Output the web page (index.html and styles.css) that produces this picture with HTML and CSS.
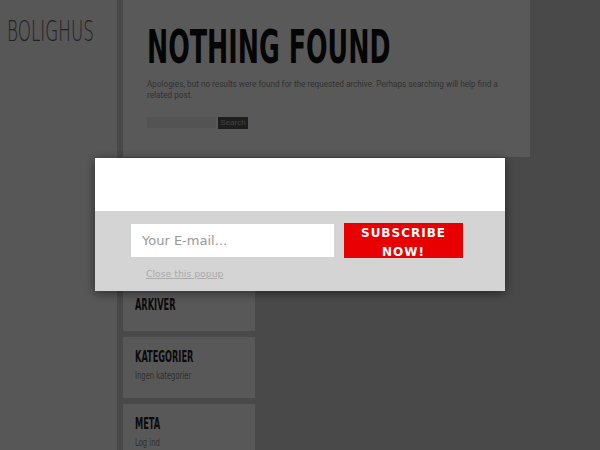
FILE: index.html
```html
<!DOCTYPE html>
<html>
<head>
<meta charset="UTF-8">
<title>Bolighus</title>
<link rel="stylesheet" href="styles.css">
</head>
<body>
<div class="site">
	<header class="masthead">
		<h1 class="site-title"><span class="squeeze">BOLIGHUS</span></h1>
	</header>
	<div class="main">
		<section class="content">
			<h2 class="page-title"><span class="squeeze">NOTHING FOUND</span></h2>
			<p>Apologies, but no results were found for the requested archive. Perhaps searching will help find a related post.</p>
			<form class="searchform">
				<input type="text" class="search-field">
				<input type="submit" class="search-btn" value="Search">
			</form>
		</section>
		<aside class="widgets">
			<div class="widget widget-search">
				<h3 class="widget-title"><span class="squeeze">SØG</span></h3>
			</div>
			<div class="widget">
				<h3 class="widget-title"><span class="squeeze">ARKIVER</span></h3>
			</div>
			<div class="widget">
				<h3 class="widget-title"><span class="squeeze">KATEGORIER</span></h3>
				<ul><li><span class="squeeze">Ingen kategorier</span></li></ul>
			</div>
			<div class="widget">
				<h3 class="widget-title"><span class="squeeze">META</span></h3>
				<ul><li><span class="squeeze">Log ind</span></li></ul>
			</div>
		</aside>
	</div>
</div>

<!-- popup over a dark layer -->
<div class="overlay"></div>
<div class="popup">
	<div class="popup-top"></div>
	<form class="popup-form">
		<div class="popup-row">
			<input type="email" class="popup-email" placeholder="Your E-mail...">
			<button type="submit" class="popup-btn">SUBSCRIBE NOW!</button>
		</div>
		<a href="#" class="popup-close">Close this popup</a>
	</form>
</div>
</body>
</html>
```
FILE: styles.css
```css
body{margin:0; background:#d0d0d0; font-family:Roboto, "Liberation Sans", sans-serif; height:450px; overflow:hidden}
.site{display:flex; gap:6px; align-items:flex-start}
.masthead{width:117px; height:450px; background:#f8f8f8; flex:none}
.squeeze{display:inline-block; font-family:"DejaVu Sans", sans-serif; font-stretch:condensed; transform:scaleX(.72); transform-origin:left center; white-space:nowrap}
.site-title{margin:0; padding:16px 0 0 7px; font-size:28px; font-weight:200; line-height:32px; color:#5e5e5e}
.site-title .squeeze{transform:scaleX(.6)}
.main{display:flex; flex-direction:column; gap:6px}
.content{width:407px; height:157px; background:#fff; padding:0 0 0 24px; box-sizing:border-box}
.page-title{margin:0; padding-top:20px; font-size:47px; font-weight:bold; line-height:54px; color:#111}
.page-title .squeeze{transform:scaleX(.6)}
.content p{margin:5px 0 0; width:360px; font-size:8.2px; line-height:10.5px; color:#8f8f8f}
.searchform{margin-top:17px; display:flex; gap:2px}
.search-field{width:69px; height:11px; border:0; padding:0; background:#eee}
.search-btn{height:12px; width:30px; border:0; padding:0; background:#555; color:#bbb; font-size:8px; line-height:12px}
.widgets{width:132px; display:flex; flex-direction:column; gap:6px}
.widget{background:#fcfcfc; padding:9px 12px 15px}
.widget-search{height:92px}
.widget-title{margin:0; font-size:15px; font-weight:bold; line-height:22px; color:#222}
.widget-title .squeeze{transform:scaleX(.61)}
.widget ul{margin:0; padding:0; list-style:none}
.widget li{font-size:10.5px; line-height:15px; color:#888}
.overlay{position:fixed; inset:0; background:rgba(0,0,0,.65)}
.popup{position:fixed; left:95px; top:158px; width:410px; box-shadow:0 2px 10px rgba(0,0,0,.5); font-family:"DejaVu Sans", sans-serif}
.popup-top{height:53px; background:#fff}
.popup-form{background:#d4d4d4; height:80px; padding:12px 0 0 36px; box-sizing:border-box}
.popup-row{display:flex; align-items:flex-start; gap:10px}
.popup-email{width:203px; height:33px; margin-top:1px; border:0; padding:0 0 0 11px; box-sizing:border-box; font-family:"DejaVu Sans", sans-serif; font-size:13px; color:#555}
.popup-email::placeholder{color:#999}
.popup-btn{width:119px; height:35px; padding:1px 8px 0; border:0; background:#e80000; color:#fff; font-family:"DejaVu Sans", sans-serif; font-weight:bold; font-size:12px; letter-spacing:1px; line-height:19px; overflow:hidden}
.popup-close{display:inline-block; margin:10px 0 0 15px; font-size:9.3px; color:#aaa}
```
